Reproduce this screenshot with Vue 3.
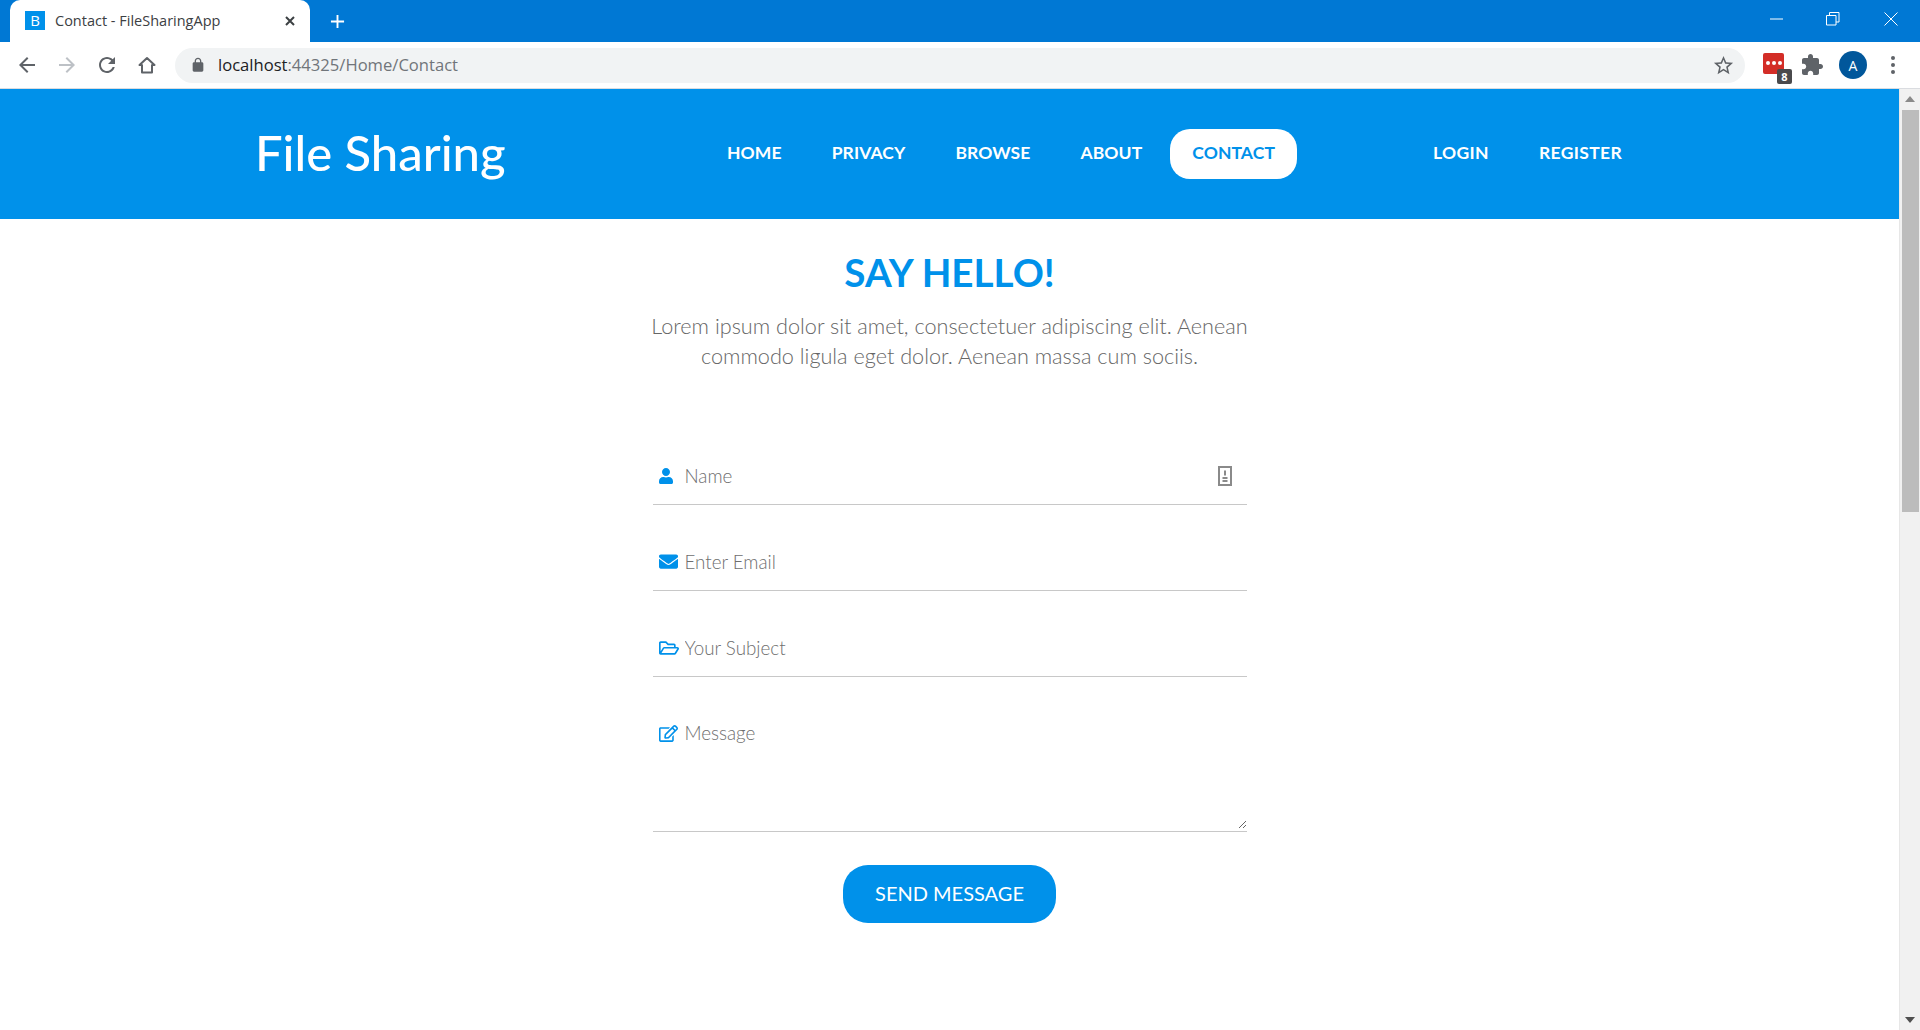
<script setup>
const links = ['HOME', 'PRIVACY', 'BROWSE', 'ABOUT', 'CONTACT']
const authLinks = ['LOGIN', 'REGISTER']
</script>

<template>
  <div class="window">
    <div class="tabstrip">
      <div class="tab">
        <span class="favicon">B</span>
        <span class="tab-title">Contact - FileSharingApp</span>
        <svg class="tab-close" viewBox="0 0 12 12"><path d="M2 2l8 8M10 2l-8 8" /></svg>
      </div>
      <svg class="new-tab" viewBox="0 0 16 16"><path d="M8 1v14M1 8h14" /></svg>
      <div class="win-controls">
        <span class="win-btn"><svg viewBox="0 0 14 14"><path d="M0 7h13" /></svg></span>
        <span class="win-btn"><svg viewBox="0 0 14 14"><path d="M.5 3.5h9.5v9.5H.5zM3.5 3.5V.5H13v9.5h-3" /></svg></span>
        <span class="win-btn"><svg viewBox="0 0 14 14"><path d="M.5.5l13 13M13.5.5l-13 13" /></svg></span>
      </div>
    </div>

    <div class="toolbar">
      <span class="tool"><svg viewBox="0 0 24 24"><path d="M20 11H7.83l5.59-5.59L12 4l-8 8 8 8 1.41-1.41L7.83 13H20v-2z" /></svg></span>
      <span class="tool faded"><svg viewBox="0 0 24 24"><path d="M12 4l-1.41 1.41L16.17 11H4v2h12.17l-5.58 5.59L12 20l8-8z" /></svg></span>
      <span class="tool"><svg viewBox="0 0 24 24"><path d="M17.65 6.35C16.2 4.9 14.21 4 12 4c-4.42 0-7.99 3.58-7.99 8s3.57 8 7.99 8c3.73 0 6.84-2.55 7.73-6h-2.08c-.82 2.33-3.04 4-5.65 4-3.31 0-6-2.69-6-6s2.69-6 6-6c1.66 0 3.14.69 4.22 1.78L13 11h7V4l-2.35 2.35z" /></svg></span>
      <span class="tool"><svg viewBox="0 0 24 24"><path class="home-line" d="M12 5L4.5 12H7v7.5h10V12h2.5z" /></svg></span>
      <div class="address">
        <svg class="lock" viewBox="0 0 24 24"><path d="M18 8h-1V6c0-2.76-2.24-5-5-5S7 3.24 7 6v2H6c-1.1 0-2 .9-2 2v10c0 1.1.9 2 2 2h12c1.1 0 2-.9 2-2V10c0-1.1-.9-2-2-2zM9 6c0-1.66 1.34-3 3-3s3 1.34 3 3v2H9V6z" /></svg>
        <span class="url"><b>localhost</b>:44325/Home/Contact</span>
        <svg class="star" viewBox="0 0 24 24"><path d="M22 9.24l-7.19-.62L12 2 9.19 8.63 2 9.24l5.46 4.73L5.82 21 12 17.27 18.18 21l-1.63-7.03L22 9.24zM12 15.4l-3.76 2.27 1-4.28-3.32-2.88 4.38-.38L12 6.1l1.71 4.04 4.38.38-3.32 2.88 1 4.28L12 15.4z" /></svg>
      </div>
      <span class="tool ext">
        <span class="lastpass"><i></i><i></i><i></i></span>
        <span class="ext-badge">8</span>
      </span>
      <span class="tool"><svg viewBox="0 0 24 24"><path d="M20.5 11H19V7c0-1.1-.9-2-2-2h-4V3.5C13 2.12 11.88 1 10.5 1S8 2.12 8 3.5V5H4c-1.1 0-1.99.9-1.99 2v3.8H3.5c1.49 0 2.7 1.21 2.7 2.7s-1.21 2.7-2.7 2.7H2V20c0 1.1.9 2 2 2h3.8v-1.5c0-1.49 1.21-2.7 2.7-2.7 1.49 0 2.7 1.21 2.7 2.7V22H17c1.1 0 2-.9 2-2v-4h1.5c1.38 0 2.5-1.12 2.5-2.5S21.88 11 20.5 11z" /></svg></span>
      <span class="tool shifted"><span class="avatar">A</span></span>
      <span class="tool"><span class="kebab"><i></i><i></i><i></i></span></span>
    </div>

    <div class="viewport">
      <div class="page">
        <header class="site-header">
          <a class="logo">File Sharing</a>
          <nav class="nav">
            <a v-for="l in links" :key="l" class="nav-link" :class="{ active: l === 'CONTACT' }">{{ l }}</a>
          </nav>
          <nav class="nav auth">
            <a v-for="l in authLinks" :key="l" class="nav-link">{{ l }}</a>
          </nav>
        </header>

        <main class="content">
          <h1>SAY HELLO!</h1>
          <p>Lorem ipsum dolor sit amet, consectetuer adipiscing elit. Aenean<br />commodo ligula eget dolor. Aenean massa cum sociis.</p>

          <form class="form" @submit.prevent>
            <div class="field">
              <span class="field-icon"><svg width="14" height="16" viewBox="0 0 448 512"><path d="M224 256c70.7 0 128-57.3 128-128S294.7 0 224 0 96 57.3 96 128s57.3 128 128 128zm89.6 32h-16.7c-22.2 10.2-46.9 16-72.9 16s-50.6-5.8-72.9-16h-16.7C60.2 288 0 348.2 0 422.4V464c0 26.5 21.5 48 48 48h352c26.5 0 48-21.5 48-48v-41.6c0-74.2-60.2-134.4-134.4-134.4z" /></svg></span>
              <input type="text" placeholder="Name" />
              <svg class="autofill" width="14" height="20" viewBox="0 0 14 20"><rect x="1" y="1" width="12" height="18" /><path d="M7 4.5v5M4.5 12h5M4.5 15h5" /></svg>
            </div>
            <div class="field">
              <span class="field-icon"><svg width="19" height="19" viewBox="0 0 512 512"><path d="M502.3 190.8c3.9-3.1 9.7-.2 9.7 4.7V400c0 26.5-21.5 48-48 48H48c-26.5 0-48-21.5-48-48V195.6c0-5 5.7-7.8 9.7-4.7 22.4 17.4 52.1 39.5 154.1 113.6 21.1 15.4 56.7 47.8 92.2 47.6 35.7.3 72-32.8 92.3-47.6 102-74.1 131.6-96.3 154-113.7zM256 320c23.2.4 56.6-29.2 73.4-41.4 132.7-96.3 142.8-104.7 173.4-128.7 5.8-4.5 9.2-11.5 9.2-18.9v-19c0-26.5-21.5-48-48-48H48C21.5 64 0 85.5 0 112v19c0 7.4 3.4 14.3 9.2 18.9 30.6 23.9 40.7 32.4 173.4 128.7 16.8 12.2 50.2 41.8 73.4 41.4z" /></svg></span>
              <input type="email" placeholder="Enter Email" />
            </div>
            <div class="field">
              <span class="field-icon"><svg width="20" height="18" viewBox="0 0 576 512"><path d="M527.9 224H480v-48c0-26.5-21.5-48-48-48H272l-64-64H48C21.5 64 0 85.5 0 112v288c0 26.5 21.5 48 48 48h400c16.5 0 31.9-8.5 40.7-22.6l79.9-128c20-31.9-3-73.4-40.7-73.4zM48 118c0-3.3 2.7-6 6-6h134.1l64 64H426c3.3 0 6 2.7 6 6v42H152c-16.8 0-32.4 8.8-41.1 23.2L48 351.4zm400 282H72l77.2-128H528z" /></svg></span>
              <input type="text" placeholder="Your Subject" />
            </div>
            <div class="field message">
              <span class="field-icon"><svg width="19" height="17" viewBox="0 0 576 512"><path d="M402.3 344.9l32-32c5-5 13.7-1.5 13.7 5.7V464c0 26.5-21.5 48-48 48H48c-26.5 0-48-21.5-48-48V112c0-26.5 21.5-48 48-48h273.5c7.1 0 10.7 8.6 5.7 13.7l-32 32c-1.5 1.5-3.5 2.3-5.7 2.3H48v352h352V350.5c0-2.1.8-4.1 2.3-5.6zm156.6-201.8L296.3 405.7l-90.4 10c-26.2 2.9-48.5-19.2-45.6-45.6l10-90.4L432.9 17.1c22.9-22.9 59.9-22.9 82.7 0l43.2 43.2c22.9 22.9 22.9 60 .1 82.8zM460.1 174L402 115.9 216.2 301.8l-7.3 65.3 65.3-7.3L460.1 174zm64.8-79.7l-43.2-43.2c-4.1-4.1-10.8-4.1-14.8 0L436 82l58.1 58.1 30.9-30.9c4-4.2 4-10.8-.1-14.9z" /></svg></span>
              <textarea placeholder="Message"></textarea>
            </div>
            <button type="submit" class="send">SEND MESSAGE</button>
          </form>
        </main>
      </div>

      <div class="scrollbar">
        <svg class="arrow" viewBox="0 0 10 6"><path d="M5 0l5 6H0z" /></svg>
        <div class="thumb"></div>
        <svg class="arrow down" viewBox="0 0 10 6"><path d="M0 0h10L5 6z" /></svg>
      </div>
    </div>
  </div>
</template>

<style scoped>
.window {
  height: 1030px;
  display: flex;
  flex-direction: column;
  overflow: hidden;
  background: #fff;
  font-family: Lato, "Open Sans", sans-serif;
}

.tabstrip {
  height: 42px;
  flex: none;
  display: flex;
  align-items: flex-end;
  padding-left: 10px;
  background: #0078d4;
}
.tab {
  width: 300px;
  height: 42px;
  display: flex;
  align-items: center;
  padding-left: 15px;
  box-sizing: border-box;
  background: #fff;
  border-radius: 10px 10px 0 0;
  font-family: "Open Sans", sans-serif;
}
.favicon {
  width: 20px;
  height: 19px;
  margin-bottom: 2px;
  display: flex;
  align-items: center;
  justify-content: center;
  background: #0091ea;
  color: #fff;
  font-size: 15px;
}
.tab-title {
  width: 229px;
  margin: 0 0 2px 10px;
  font-size: 14.5px;
  color: #3c4043;
}
.tab-close {
  width: 12px;
  height: 12px;
  fill: none;
  stroke: #3c4043;
  stroke-width: 2;
}
.new-tab {
  width: 15px;
  height: 15px;
  margin: 0 0 13px 20px;
  fill: none;
  stroke: #fff;
  stroke-width: 2;
}
.win-controls {
  margin-left: auto;
  display: flex;
  align-self: flex-start;
}
.win-btn {
  width: 58px;
  height: 38px;
  display: flex;
  align-items: center;
  justify-content: center;
}
.win-btn:first-child {
  width: 54px;
}
.win-btn svg {
  width: 14px;
  height: 14px;
  fill: none;
  stroke: #fff;
  stroke-width: 1;
}

.toolbar {
  height: 46px;
  flex: none;
  display: flex;
  align-items: center;
  padding-left: 7px;
  background: #fff;
  border-bottom: 1px solid #dadce0;
}
.tool {
  position: relative;
  width: 40px;
  height: 40px;
  flex: none;
  display: flex;
  align-items: center;
  justify-content: center;
}
.tool.shifted {
  margin-left: 1px;
}
.tool svg {
  width: 24px;
  height: 24px;
  fill: #5f6368;
}
.tool.faded svg {
  fill: #bdc1c6;
}
.tool svg .home-line {
  fill: none;
  stroke: #5f6368;
  stroke-width: 2;
  stroke-linejoin: round;
}
.address {
  width: 1570px;
  height: 35px;
  margin: 0 7px 0 8px;
  flex: none;
  display: flex;
  align-items: center;
  padding: 0 10px 0 15px;
  box-sizing: border-box;
  background: #f1f3f4;
  border-radius: 18px;
}
.lock {
  width: 16px;
  height: 16px;
  fill: #5f6368;
}
.url {
  margin: 0 0 2px 12px;
  font-family: "Open Sans", sans-serif;
  font-size: 16.6px;
  color: #70757a;
}
.url b {
  font-weight: 400;
  color: #202124;
}
.star {
  width: 23px;
  height: 23px;
  margin-left: auto;
  fill: #5f6368;
}
.lastpass {
  width: 21px;
  height: 21px;
  margin: -4px 0 0 2px;
  display: flex;
  align-items: center;
  gap: 2px;
  padding-left: 3px;
  box-sizing: border-box;
  background: #d32d27;
  border-radius: 2px;
}
.lastpass i {
  width: 4px;
  height: 4px;
  background: #fff;
  border-radius: 50%;
}
.ext-badge {
  position: absolute;
  right: 0;
  bottom: 1px;
  width: 15px;
  height: 15px;
  display: flex;
  align-items: center;
  justify-content: center;
  background: #4a4a4c;
  border-radius: 2px;
  color: #fff;
  font-family: "Open Sans", sans-serif;
  font-size: 11px;
  font-weight: 700;
}
.avatar {
  width: 28px;
  height: 28px;
  display: flex;
  align-items: center;
  justify-content: center;
  background: #01579b;
  border-radius: 50%;
  color: #fff;
  font-family: "Open Sans", sans-serif;
  font-size: 14px;
}
.kebab {
  display: flex;
  flex-direction: column;
  gap: 3px;
}
.kebab i {
  width: 4px;
  height: 4px;
  background: #5f6368;
  border-radius: 50%;
}

.viewport {
  flex: 1;
  min-height: 0;
  display: flex;
}
.page {
  flex: 1;
  min-width: 0;
}

.site-header {
  height: 130px;
  display: flex;
  align-items: flex-start;
  padding-left: 255px;
  background: #0091ea;
}
.logo {
  width: 450px;
  margin-top: 35px;
  color: #fff;
  font-size: 49px;
  line-height: 56px;
  font-weight: 500;
}
.nav {
  display: flex;
  gap: 6px;
  margin-top: 40px;
}
.nav.auth {
  margin-left: 114px;
}
.nav.auth .nav-link {
  letter-spacing: 0.35px;
}
.nav-link {
  height: 50px;
  padding: 0 22px 4px;
  box-sizing: border-box;
  display: flex;
  align-items: center;
  border-radius: 20px;
  color: #fff;
  font-size: 17.5px;
  font-weight: 700;
  letter-spacing: 0.1px;
}
.nav-link.active {
  background: #fff;
  color: #0091ea;
}

.content {
  padding-top: 31px;
  text-align: center;
}
h1 {
  margin: 0;
  color: #0091ea;
  font-size: 38.6px;
  line-height: 44px;
  font-weight: 700;
}
p {
  margin: 17px 0 0;
  color: #666;
  font-size: 21.65px;
  line-height: 30px;
  font-weight: 300;
}
.form {
  width: 594px;
  margin: 76px auto 0;
  display: flex;
  flex-direction: column;
  align-items: center;
}
.field {
  width: 100%;
  height: 57px;
  display: flex;
  align-items: center;
  margin-bottom: 28px;
  border-bottom: 1px solid #c8c8c8;
}
.field-icon {
  width: 32px;
  flex: none;
  display: flex;
  padding-left: 6px;
  box-sizing: border-box;
}
.field-icon svg {
  fill: #0091ea;
}
input,
textarea {
  flex: 1;
  min-width: 0;
  height: 54px;
  padding: 0;
  border: 0;
  outline: 0;
  background: transparent;
  color: #777;
  font-family: Lato, "Open Sans", sans-serif;
  font-size: 18.8px;
  font-weight: 300;
}
input::placeholder,
textarea::placeholder {
  color: #6e6e6e;
}
.autofill {
  margin-right: 15px;
  fill: none;
  stroke: #8a8a8a;
  stroke-width: 2;
}
.field.message {
  height: 126px;
  margin-bottom: 33px;
  align-items: flex-start;
}
.field.message .field-icon {
  margin-top: 20px;
}
.field.message textarea {
  height: auto;
  align-self: stretch;
  margin-bottom: 2px;
  padding-top: 17px;
  line-height: 22px;
}
.send {
  width: 213px;
  height: 58px;
  padding: 0 0 2px;
  border: 0;
  border-radius: 25px;
  background: #0091ea;
  color: #fff;
  font-family: Lato, "Open Sans", sans-serif;
  font-size: 20px;
  font-weight: 400;
}

.scrollbar {
  width: 21px;
  flex: none;
  display: flex;
  flex-direction: column;
  align-items: center;
  box-sizing: border-box;
  background: #f1f1f1;
  border-left: 1px solid #e7e7e7;
}
.arrow {
  width: 10px;
  height: 6px;
  margin-top: 7px;
  fill: #8a8a8a;
}
.arrow.down {
  margin-top: auto;
  margin-bottom: 7px;
  fill: #505050;
}
.thumb {
  width: 17px;
  height: 402px;
  margin-top: 8px;
  background: #bcbcbc;
}
</style>

<style>
html,
body {
  margin: 0;
  overflow: hidden;
}
</style>
